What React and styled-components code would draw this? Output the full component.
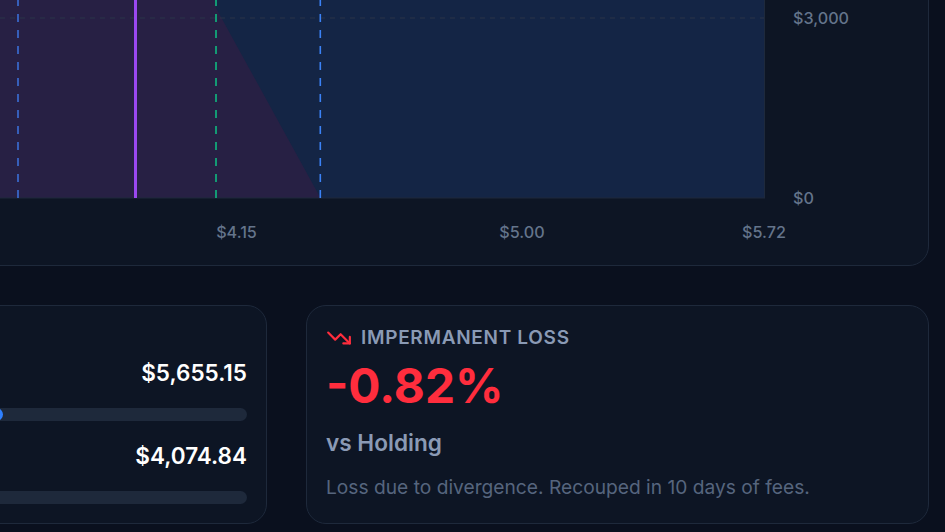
import React from "react";
import styled, { createGlobalStyle } from "styled-components";
import { TrendingDown } from "lucide-react";

const GlobalStyle = createGlobalStyle`
  html, body {
    margin: 0;
    background: #0a101e;
    font-family: Inter, "Liberation Sans", sans-serif;
  }
`;

const Viewport = styled.div`
  width: 945px;
  height: 532px;
  overflow: hidden;
`;

const Page = styled.div`
  width: 1245px;
  margin: -134px 0 0 -316px;
  display: flex;
  flex-direction: column;
  gap: 39px;
`;

const Card = styled.section`
  box-sizing: border-box;
  background: #0d1524;
  border: 1px solid #1e293b;
  border-radius: 20px;
  padding: ${(p) => p.$padding || "0"};
  height: ${(p) => p.$height};
`;

const ChartSvg = styled.svg`
  display: block;
`;

const AxisText = styled.text`
  fill: #64748b;
  font-size: 16.2px;
  font-weight: 500;
`;

const BottomRow = styled.div`
  display: grid;
  grid-template-columns: 583px 623px;
  gap: 39px;
`;

const Metric = styled.div`
  display: flex;
  justify-content: flex-end;
  margin-top: ${(p) => p.$top};
  font-size: 22.5px;
  line-height: 32px;
  font-weight: 600;
  color: #ffffff;
`;

const Track = styled.div`
  height: 13px;
  margin-top: 19px;
  border-radius: 7px;
  background: #1e293b;
  overflow: hidden;
`;

const Fill = styled.div`
  height: 100%;
  border-radius: 7px;
  background: #2f80ff;
`;

const LossHeader = styled.div`
  display: flex;
  align-items: center;
  gap: 9px;
  color: #ff2d3d;
`;

const LossTitle = styled.span`
  font-size: 19px;
  line-height: 24px;
  font-weight: 600;
  letter-spacing: 0.7px;
  color: #8a9ab5;
`;

const LossValue = styled.div`
  margin-top: 7px;
  font-size: 47.8px;
  line-height: 56px;
  font-weight: 700;
  color: #ff2d3d;
`;

const LossCaption = styled.div`
  margin-top: 15px;
  font-size: 22.6px;
  line-height: 28px;
  font-weight: 600;
  color: #8a9ab5;
`;

const LossNote = styled.p`
  margin: 16px 0 0;
  font-size: 19.2px;
  line-height: 28px;
  color: #56657e;
`;

const OFFSET_X = 316;
const OFFSET_Y = 134;
const AXIS_Y = 198;
const PLOT_RIGHT = 765;

function PayoffChart() {
  const xLabels = [
    ["$4.15", 236.5],
    ["$5.00", 522],
    ["$5.72", 764],
  ];
  return (
    <ChartSvg width="1243" height="398" aria-label="Position value by price">
      <g transform={`translate(${OFFSET_X - 1},${OFFSET_Y - 1})`}>
        <rect x="-315" y="-133" width={PLOT_RIGHT + 315} height={AXIS_Y + 133} fill="#142545" />
        <polygon
          points={`-315,-133 216,-133 216,8 320.5,${AXIS_Y} -315,${AXIS_Y}`}
          fill="#272044"
        />
        <line x1="0" x2={PLOT_RIGHT} y1="18" y2="18" stroke="#2a3449" strokeWidth="1" strokeDasharray="5 5" />
        <line x1={PLOT_RIGHT - 0.5} x2={PLOT_RIGHT - 0.5} y1="-133" y2={AXIS_Y} stroke="#1e293b" />
        <line x1="-315" x2={PLOT_RIGHT} y1={AXIS_Y} y2={AXIS_Y} stroke="#1e293b" />
        <line x1="18" x2="18" y1="-130" y2={AXIS_Y} stroke="#3b6fd8" strokeWidth="1.6" strokeDasharray="8 8" />
        <line x1="135.5" x2="135.5" y1="-133" y2={AXIS_Y} stroke="#9a48f0" strokeWidth="3" />
        <line x1="216" x2="216" y1="-130" y2={AXIS_Y} stroke="#10b981" strokeWidth="1.6" strokeDasharray="8 8" />
        <line x1="320.3" x2="320.3" y1="-130" y2={AXIS_Y} stroke="#3b82f6" strokeWidth="1.6" strokeDasharray="8 8" />
        <AxisText x="793" y="24">$3,000</AxisText>
        <AxisText x="793" y="204">$0</AxisText>
        {xLabels.map(([label, x]) => (
          <AxisText key={label} x={x} y="238" textAnchor="middle">{label}</AxisText>
        ))}
      </g>
    </ChartSvg>
  );
}

export default function App() {
  return (
    <Viewport>
      <GlobalStyle />
      <Page>
        <Card $height="400px">
          <PayoffChart />
        </Card>
        <BottomRow>
          <Card $height="219px" $padding="20px 19px">
            <Metric $top="31px">$5,655.15</Metric>
            <Track>
              <Fill style={{ width: "55%" }} />
            </Track>
            <Metric $top="19px">$4,074.84</Metric>
            <Track />
          </Card>
          <Card $height="219px" $padding="19px 19px">
            <LossHeader>
              <TrendingDown size={26} />
              <LossTitle>IMPERMANENT LOSS</LossTitle>
            </LossHeader>
            <LossValue>-0.82%</LossValue>
            <LossCaption>vs Holding</LossCaption>
            <LossNote>Loss due to divergence. Recouped in 10 days of fees.</LossNote>
          </Card>
        </BottomRow>
      </Page>
    </Viewport>
  );
}
